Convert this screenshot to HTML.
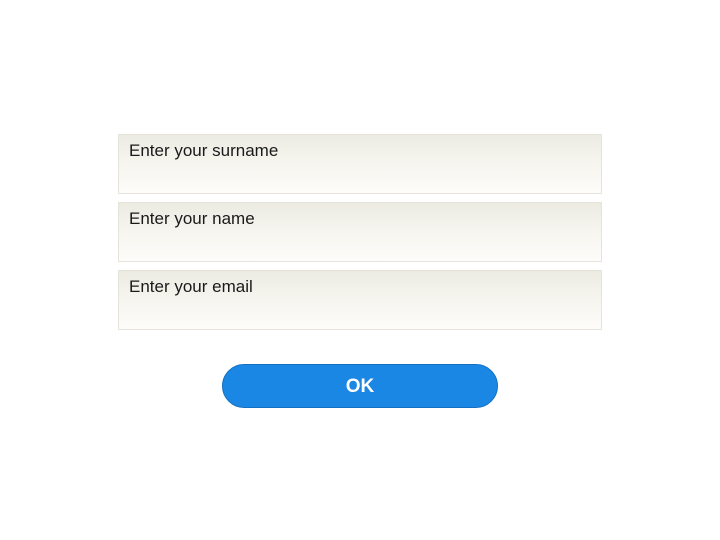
<!DOCTYPE html>
<html><head><style>
body{margin:0;width:720px;height:540px;background:#fff;font-family:"Liberation Sans",sans-serif;position:relative}
.f{position:absolute;left:118px;width:482px;height:58px;border:1px solid #e6e3da;background:linear-gradient(#ecebe2,#f6f5ef 50%,#fdfcfa);box-sizing:content-box}
.f span{position:absolute;left:10px;top:6px;font-size:17px;color:#1a1a1a}
.b{position:absolute;left:222px;top:364px;width:274px;height:42px;border:1px solid #1470c2;border-radius:22px;background:#1a87e5;color:#fff;font-weight:bold;font-size:19px;text-align:center;line-height:44px}
</style></head><body>
<div class="f" style="top:134px"><span>Enter your surname</span></div>
<div class="f" style="top:202px"><span>Enter your name</span></div>
<div class="f" style="top:270px"><span>Enter your email</span></div>
<div class="b">OK</div>
</body></html>
